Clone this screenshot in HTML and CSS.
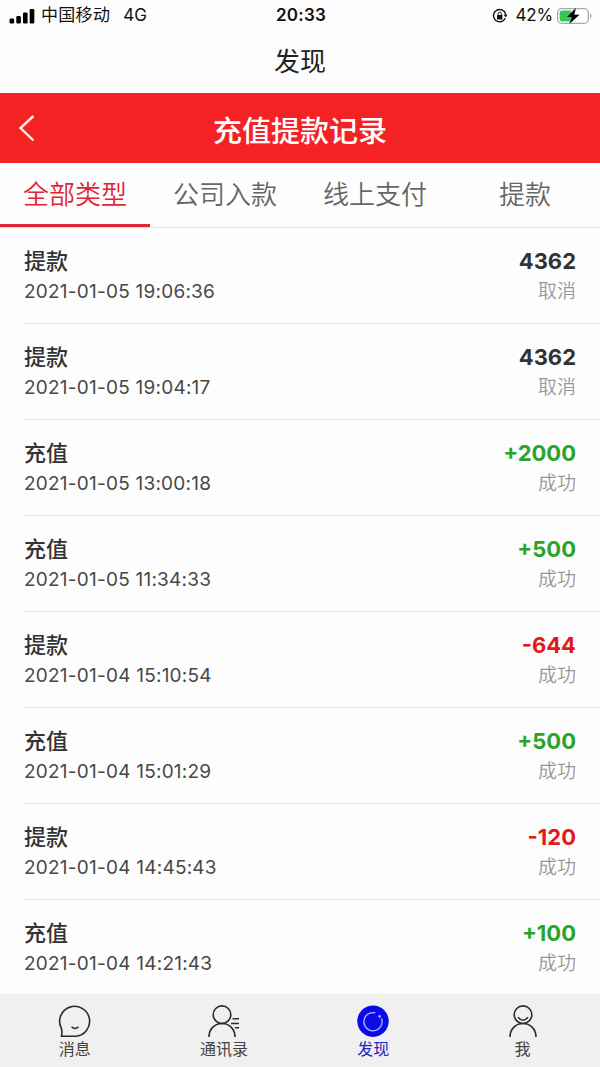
FILE: index.html
```html
<!DOCTYPE html>
<html lang="zh-CN">
<head>
<meta charset="utf-8">
<title>充值提款记录</title>
<link rel="stylesheet" href="styles.css">
</head>
<body>
<div class="app">
  <div class="status">
    <div class="status-left">
      <svg class="signal" width="26" height="16" viewBox="0 0 26 16"><rect x="0.5" y="10.5" width="4.6" height="5" rx="1.2"/><rect x="7.3" y="8" width="4.6" height="7.5" rx="1.2"/><rect x="14" y="4.500" width="4.600" height="11" rx="1.2"/><rect x="20.700" y="1" width="4.600" height="14.500" rx="1.2"/></svg>
      <span class="carrier">中国移动</span><span class="network">4G</span>
    </div>
    <div class="clock">20:33</div>
    <div class="status-right">
      <svg width="16" height="16" viewBox="0 0 16 16"><path d="M13.300 10.300A6.200 6.200 0 1 1 13.700 6.200" fill="none" stroke="#111" stroke-width="1.400"/><path d="M11.400 6.600h4.200l-1.800 3z" fill="#111"/><rect x="5" y="7" width="5.400" height="4.400" rx=".5" fill="#111"/><path d="M6.100 7V5.700a1.600 1.600 0 0 1 3.200 0V7" fill="none" stroke="#111"/></svg>
      <span class="percent">42%</span>
      <svg class="battery" width="36" height="18" viewBox="0 0 36 18"><rect x=".7" y="1.700" width="30.600" height="14.600" rx="4" fill="#fff" stroke="#aaa" stroke-width="1.300"/><path d="M5.200 3.500H14v11H5.200A2.500 2.500 0 0 1 2.700 12V6a2.500 2.500 0 0 1 2.500-2.500z" fill="#35c65a"/><path d="M33 6q3 3 0 6z" fill="#aaa"/><path d="M19.300 .3 9 10.500h5.400L11.700 17.700 23 7.400h-5.500z" fill="#000" stroke="#fff" stroke-width=".4"/></svg>
    </div>
  </div>
  <div class="page-title">发现</div>
  <header class="header">
    <svg class="back" width="18" height="28" viewBox="0 0 18 28"><path d="M15.500 2 2.500 14 15.500 26.500" fill="none" stroke="#fff1df" stroke-width="2.400"/></svg>
    <h1>充值提款记录</h1>
  </header>
  <nav class="tabs">
    <div class="tab tab-active">全部类型</div>
    <div class="tab">公司入款</div>
    <div class="tab">线上支付</div>
    <div class="tab">提款</div>
  </nav>
  <main class="list">
    <div class="row"><div><div class="kind">提款</div><div class="date">2021-01-05 19:06:36</div></div><div class="right"><div class="amount">4362</div><div class="state">取消</div></div></div>
    <div class="row"><div><div class="kind">提款</div><div class="date">2021-01-05 19:04:17</div></div><div class="right"><div class="amount">4362</div><div class="state">取消</div></div></div>
    <div class="row"><div><div class="kind">充值</div><div class="date">2021-01-05 13:00:18</div></div><div class="right"><div class="amount plus">+2000</div><div class="state">成功</div></div></div>
    <div class="row"><div><div class="kind">充值</div><div class="date">2021-01-05 11:34:33</div></div><div class="right"><div class="amount plus">+500</div><div class="state">成功</div></div></div>
    <div class="row"><div><div class="kind">提款</div><div class="date">2021-01-04 15:10:54</div></div><div class="right"><div class="amount minus">-644</div><div class="state">成功</div></div></div>
    <div class="row"><div><div class="kind">充值</div><div class="date">2021-01-04 15:01:29</div></div><div class="right"><div class="amount plus">+500</div><div class="state">成功</div></div></div>
    <div class="row"><div><div class="kind">提款</div><div class="date">2021-01-04 14:45:43</div></div><div class="right"><div class="amount minus">-120</div><div class="state">成功</div></div></div>
    <div class="row"><div><div class="kind">充值</div><div class="date">2021-01-04 14:21:43</div></div><div class="right"><div class="amount plus">+100</div><div class="state">成功</div></div></div>
  </main>
  <footer class="bottom">
    <div class="item"><svg width="36" height="34" viewBox="0 0 36 34"><path d="M4.300 32.300C5.300 29.500 5.200 27 4.200 24A15 15 0 1 1 18.500 32.300z" fill="none" stroke="#2b2b2b" stroke-width="1.600" stroke-linejoin="round"/><path d="M14.500 22.800q3.500 3.500 7 0" fill="none" stroke="#2b2b2b" stroke-width="1.500"/></svg><span>消息</span></div>
    <div class="item"><svg width="36" height="34" viewBox="0 0 36 34"><g fill="none" stroke="#2b2b2b" stroke-width="1.600"><circle cx="16" cy="10.700" r="8.800"/><path d="M3 33C3 24.500 9 19.500 16 19.500S29 24.500 29 33M26.500 14.800h6.500M25 19.500h8M29 23.700h4"/></g></svg><span>通讯录</span></div>
    <div class="item item-active"><svg width="36" height="34" viewBox="0 0 36 34"><circle cx="18" cy="17.200" r="15.700" fill="#0b0be8"/><path d="M20.300 8.900A9.100 9.100 0 1 0 26.500 14.500" fill="none" stroke="#b5b7ff" stroke-width="1.300"/><circle cx="24.600" cy="12.400" r="1.300" fill="#b5b7ff"/></svg><span>发现</span></div>
    <div class="item"><svg width="36" height="34" viewBox="0 0 36 34"><g fill="none" stroke="#2b2b2b" stroke-width="1.600"><circle cx="18" cy="10.700" r="8.800"/><path d="M5 33C5 24.500 11 19.500 18 19.500S31 24.500 31 33M13 13.200q5 6 10 0"/></g></svg><span>我</span></div>
  </footer>
</div>
</body>
</html>
```
FILE: styles.css
```css
* { box-sizing: border-box; }
body {
  margin: 0;
  background: #fdfdfd;
  color: #333;
  font-family: Inter, "Noto Sans CJK SC", sans-serif;
}
svg { display: block; flex: none; }
.app { width: 600px; height: 1067px; overflow: hidden; }
.status {
  display: grid;
  grid-template-columns: 1fr auto 1fr;
  align-items: center;
  height: 31px;
  padding: 0 7px 0 9px;
  color: #111;
  line-height: 31px;
}
.status-left, .status-right { display: flex; align-items: center; }
.status-right { justify-content: flex-end; }
.carrier { margin-left: 6px; font-size: 17px; letter-spacing: .3px; }
.network { margin-left: 13px; font-size: 17px; }
.clock { font-size: 17px; font-weight: 600; letter-spacing: .2px; }
.percent { margin: 0 4px 0 8px; font-size: 17px; letter-spacing: -.2px; }
.page-title {
  height: 62px;
  padding-top: 11px;
  color: #222;
  font-size: 26px;
  line-height: 40px;
  text-align: center;
}
.header {
  display: grid;
  grid-template-columns: 60px 1fr 60px;
  align-items: center;
  height: 70px;
  background: #f52225;
}
.back { margin-left: 18px; }
.header h1 {
  margin: 0;
  padding-top: 7px;
  color: #fff;
  font-size: 29px;
  font-weight: 500;
  line-height: 40px;
  text-align: center;
}
.tabs {
  display: grid;
  grid-template-columns: repeat(4, 1fr);
  height: 65px;
  border-bottom: 1px solid #e0e0e2;
}
.tab {
  height: 64px;
  color: #666;
  font-size: 26px;
  font-weight: 350;
  line-height: 64px;
  text-align: center;
}
.tab-active { border-bottom: 3px solid #dc2636; color: #e02436; }
.row {
  display: flex;
  justify-content: space-between;
  height: 96px;
  margin-left: 24px;
  padding: 18px 24px 0 0;
  border-bottom: 1px solid #e4e4e6;
}
.row:last-child { height: 94px; border-bottom: 0; }
.right { text-align: right; }
.kind, .amount { height: 30px; line-height: 30px; font-size: 22px; }
.kind { font-weight: 500; }
.amount { font-weight: 700; }
.date, .state { height: 32px; line-height: 32px; font-size: 19px; }
.date { color: #484848; letter-spacing: .23px; }
.state { color: #999; font-weight: 350; }
.plus { color: #28a528; }
.minus { color: #e31818; }
.bottom {
  display: grid;
  grid-template-columns: repeat(4, 149.300px);
  height: 73px;
  background: #f0f0f0;
  color: #444;
}
.item {
  display: flex;
  flex-direction: column;
  align-items: center;
  padding-top: 10px;
  font-size: 16px;
  line-height: 22px;
}
.item-active { color: #2424c8; }
```
